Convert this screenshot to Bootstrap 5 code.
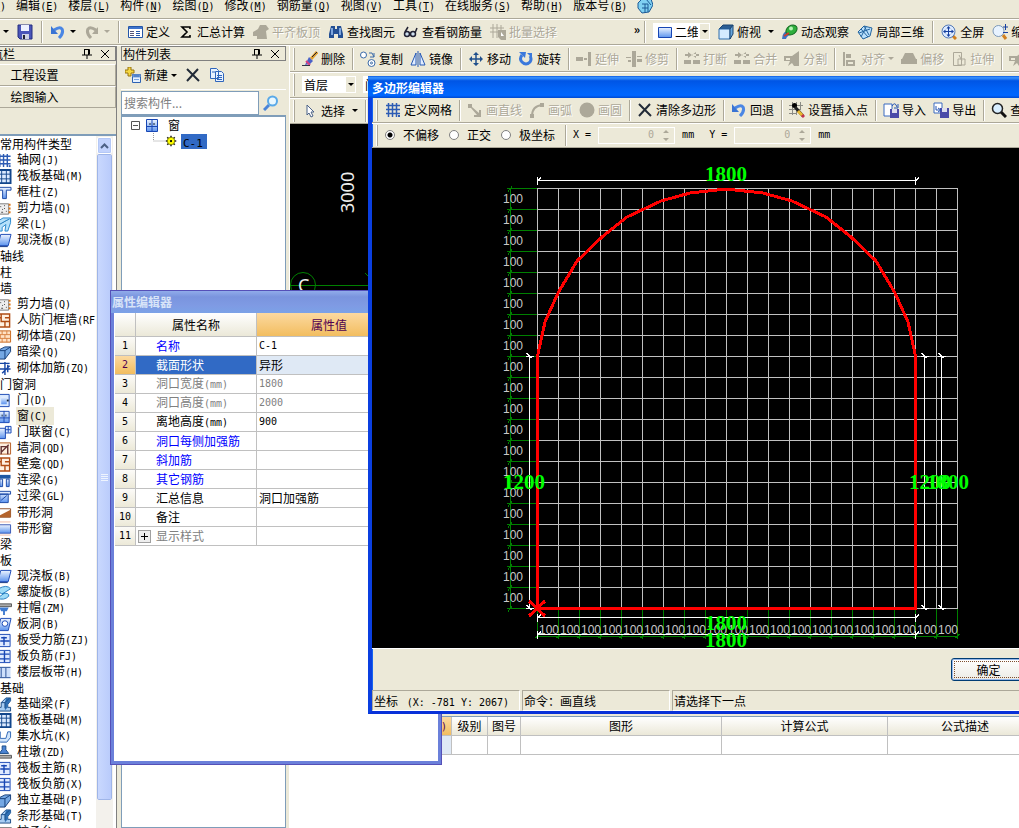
<!DOCTYPE html>
<html lang="zh-CN">
<head>
<meta charset="utf-8">
<meta name="viewport" content="width=device-width, initial-scale=1">
<title>多边形编辑器</title>
<link href="https://cdn.jsdelivr.net/npm/bootstrap@5.3.0/dist/css/bootstrap.min.css" rel="stylesheet">
<style>
:root{--face:#ece9d8;--dark:#aca899;--line:#c0c0c0;--edge:#7f9db9;--sel:#316ac5}
html,body{height:100%}
body{font:12px/16px "Noto Sans CJK SC",sans-serif;color:#000;background:var(--face);overflow:hidden}
button,input,select{font:inherit;color:inherit}
.sprite{position:absolute;width:0;height:0}
.app{position:relative;height:100vh;min-height:800px;margin-left:-47px;white-space:nowrap}
.lt{font-family:"DejaVu Sans Mono",monospace;font-size:10px}
.ic{width:16px;height:16px;flex:none}
.tb{background:none;border:0;padding:0;display:flex;align-items:center;gap:3px;flex:none}
.tb:disabled{color:var(--dark);text-shadow:1px 1px #fff}
.tb:disabled .ic{color:var(--dark)}
.bar{display:flex;align-items:center;border-bottom:1px solid var(--dark);box-shadow:0 1px #fff;overflow:hidden;flex:none}
.sep{width:1px;height:22px;background:var(--dark);box-shadow:1px 0 #fff;flex:none}
.grip{width:2px;height:22px;border-left:1px solid #fff;border-right:1px solid var(--dark);flex:none}
.dd{border:3px solid transparent;border-top-color:currentColor;border-bottom:0;width:6px;flex:none}
.menubar{height:19px;line-height:12px;gap:10px;padding:0 0 6px 11px}
.menubar button{background:none;border:0;padding:0}
.bar-a{height:26px;gap:8px}
.lead-group{width:157px}
.tail-group{width:80px}
.bar-b{height:26px;gap:7px;padding-left:3px}
.combo{position:relative;background:#fff;flex:none;height:17px;display:flex;align-items:center}
.combo select{appearance:none;border:0;background:transparent;padding:0 12px 0 2px;height:17px;line-height:16px;width:100%;min-width:0}
.combo .arrow{position:absolute;right:0;top:0;bottom:0;width:11px;background:var(--face);border:1px solid #fff;display:flex;align-items:center;justify-content:center;pointer-events:none}
.panes{flex:1;min-height:0;padding-top:1px}
.dock{width:164px;flex:none;display:flex;flex-direction:column;border-right:1px solid #808080}
.dockhead{height:15px;line-height:14px;border:1px solid #808080;padding:0 4px 0 1px;flex:none;display:flex;align-items:center;gap:6px}
.dock .dockhead{margin-bottom:3px}
.dockhead button{background:none;border:0;padding:0;display:flex}
.dockhead svg{width:12px;height:12px}
.navtab{height:22px;border:1px solid var(--dark);border-top-color:#fff;background:none;padding:0;text-align:center;width:100%;flex:none}
.navlist{flex:1;min-height:0;margin-top:26px;border-top:2px solid var(--edge);background:#fff;display:flex;overflow:hidden}
.navlist ul{flex:1;min-width:0;margin:0;padding:0 0 0 47px;list-style:none;overflow:hidden}
.navlist li{height:16px;line-height:16px;display:flex;align-items:center;gap:5px}
.navlist li.it{margin-left:-4px}
.navlist li.it .ic{height:15px}
.navlist .cur span{background:var(--face);padding:0 7px 0 1px;margin:0 -1px}
.navlist .cur b{padding:0!important}
.scroll{width:17px;flex:none;background:#f3f1ec;padding:1px;display:flex;flex-direction:column;margin-right:3px}
.scroll .up{height:17px;flex:none;border:1px solid #fff;border-radius:2px;background:#c3d3fd;padding:0;display:flex;align-items:center;justify-content:center;box-shadow:inset 0 0 0 1px #b4c8f6}
.scroll .thumb{flex:1;margin-bottom:27px;border:1px solid #fff;border-radius:2px;background:linear-gradient(90deg,#c9d8fe,#b9cbfb);outline:1px solid #9fb5e8;outline-offset:-1px;display:flex;align-items:center;justify-content:center}
.complist{width:165px;flex:none;display:flex;flex-direction:column;margin-left:4px}
.tools{height:28px}
.findrow{height:26px}
.search{height:24px;border:1px solid var(--edge);padding:0 2px;width:138px;background:#fff}
.search::placeholder{color:#808080}
.tree{flex:1;background:#fff;border:1px solid var(--edge);border-top-width:2px;padding:0 0 0 9px}
.tree>div{height:16px;display:flex;align-items:center}
.tree .gear{width:12px;height:12px}
.pick{background:var(--sel);padding:0 4px 0 2px;margin-left:4px;border:0;height:15px;line-height:15px}
.pick .lt{font-size:11px}
.work{flex:1;min-width:0;display:flex;flex-direction:column;margin-left:3px;border-left:1px solid #fff}
.cad{flex:1;background:#000;min-height:0;margin-bottom:3px;overflow:hidden}
.cad svg,.stage svg{display:block;width:100%}
.result{height:112px;flex:none;background:#fff;border-top:1px solid var(--edge);overflow:hidden}
.result table{width:calc(100% + 24px)}
.grid{table-layout:fixed;border-collapse:separate;border-spacing:0;background:#fff}
.grid th,.grid td{border-right:1px solid var(--line);border-bottom:1px solid var(--line);height:19px;padding:0;line-height:16px;overflow:hidden;font-weight:400}
.grid th{text-align:center;background:linear-gradient(#fff,#ebe8d8)}
.grid .hot{background:linear-gradient(#fcd9a0,#f2bd5f);color:#500050}
.grid .pale{background:#dfe9f5}
.win{position:absolute;display:flex;flex-direction:column}
.wtitle{font-weight:700;color:#fff;flex:none}
.props{left:157px;top:290px;width:332px;height:475px;background:#fff;border:solid #6b80da;border-width:0 4px 4px;outline:1px solid #5550b8;outline-offset:-1px}
.props .wtitle{height:23px;line-height:24px;background:linear-gradient(#94b0ec,#7a94de 30%,#7f9be4 70%,#7ba2e7);color:#d8e4f8;margin:0 -4px;padding-left:2px}
.props table{width:287px;margin-left:1px}
.props thead th{height:24px}
.props tbody th{background:linear-gradient(#fcfbf8,#ece9d8)}
.props td:nth-child(2){padding-left:20px;position:relative}
.props td:nth-child(3){padding-left:2px}
.props .opt{color:#00f}.props .off td{color:#808080}
.props .on td:nth-child(2){background:var(--sel);color:#fff}
.plus{position:absolute;left:2px;top:3px;width:13px;height:13px;border:1px solid #a0a0a0;background:#eee;padding:0;display:flex}
.poly{left:415px;top:76px;right:-23px;background:var(--face);border:solid #0831d9;border-width:0 4px 3px;border-left-color:#0a3fe0;box-shadow:inset 1px 0 #1663f0}
.poly .wtitle{height:22px;line-height:23px;background:linear-gradient(#0a5be4,#3a93ff 8%,#0055e5 22%,#0062f6 60%,#0066ff 88%,#0049d0);margin:0 -4px;padding-left:4px}
.poly .bar{height:25px;gap:7px;padding-left:4px}
.poly .bar .sep,.poly .bar .grip{height:21px}
.poly input[type=radio]{appearance:none;width:10px;height:10px;border:1px solid #808080;border-radius:50%;background:#fff;margin:0;flex:none}
.poly input[type=radio]:checked{background:radial-gradient(#000 2px,#fff 3px)}
.radio{display:flex;align-items:center;gap:8px;margin-right:3px}
.spin{width:77px;height:17px;border:1px solid #fff;display:flex;align-items:center;gap:4px;flex:none;color:var(--dark)}
.spin input{flex:1;min-width:0;border:0;background:none;text-align:right;padding:0;color:var(--dark)}
.stage{background:#000;height:500px;flex:none}
.foot{height:42px;border-top:1px solid #fff;flex:none;display:flex;align-items:center;justify-content:flex-end;padding-right:12px}
.okbtn{width:75px;height:23px;border:1px solid #003c74;border-radius:3px;background:linear-gradient(#fff,#ecebe5);box-shadow:inset 0 0 0 1px #98b8ea;padding:0;outline:1px dotted #805030;outline-offset:-4px}
.status{display:flex;gap:2px;height:21px;flex:none}
.status div{width:148px;flex:none;border:1px solid #fff;border-top-color:var(--dark);border-left-color:var(--dark);padding-left:1px;line-height:19px}
.status div:last-child{width:auto;flex:1}
.dim{font:12px "Liberation Sans",sans-serif;fill:#c8c8c8}
.big{font:700 21px "Liberation Serif",serif;fill:#0f0}
.axis{font:18px "Noto Sans",sans-serif;fill:#eee}
</style>
</head>
<body>
<svg class="sprite" xmlns="http://www.w3.org/2000/svg" aria-hidden="true">
<linearGradient id="gb" x2="0" y2="1"><stop stop-color="#eef5ff"/><stop offset="1" stop-color="#5c93ee"/></linearGradient>
<symbol id="open" viewBox="0 0 16 16"><path d="M1 5h12v8H1z" fill="#f4cf63" stroke="#a57a20"/><path d="M7 2q5-1 6 3l2-1" fill="none" stroke="#355a9c"/></symbol>
<symbol id="save" viewBox="0 0 16 16"><path d="M1 1h14v14H3l-2-2z" fill="#4a55b8" stroke="#242f80"/><path d="M4 1h8v6H4z" fill="#eef2ff"/><path d="M5 10h7v5H5z" fill="#cfd3e4"/><path d="M6 11h2v4H6z" fill="#223"/></symbol>
<symbol id="undo" viewBox="0 0 16 16"><path d="M4 6q6-4 8-1 2 4-3 9" fill="none" stroke="#4a86e4" stroke-width="3"/><path d="M1 2v8h7z" fill="#3a74d4"/></symbol>
<symbol id="redo" viewBox="0 0 16 16"><path d="M12 6Q6 2 4 5q-2 4 3 9" fill="none" stroke="#aca899" stroke-width="3"/><path d="M14 3v7H8z" fill="#aca899"/></symbol>
<symbol id="form" viewBox="0 0 16 16"><path d="M1.500 2.500h14v11h-14z" fill="#fff" stroke="#2456a8"/><path d="M2 3h13v2H2z" fill="#3f74cc"/><path d="M3 7.500h4M3 9.500h4M3 11.500h4" stroke="#557"/><path d="M9 7.500h4M9 11.500h4M9 9.500h4" stroke="#2456a8"/></symbol>
<symbol id="sigma" viewBox="0 0 16 16"><path d="M12 5V3H4l5 5-5 5h8v-2" fill="none" stroke="#000" stroke-width="1.600"/></symbol>
<symbol id="hand" viewBox="0 0 16 16"><path d="M0 8l5-3 2-4h6l3 4-3 2 1 8H4v-3L0 12z" fill="currentColor"/></symbol>
<symbol id="bino" viewBox="0 0 16 16"><path d="M3 2h4v3h2V2h4l2 8v4h-5v-4H6v4H1v-4z" fill="#234f94"/><path d="M4 4v7M12 4v7" stroke="#9cc2f5" stroke-width="1.500"/></symbol>
<symbol id="glass" viewBox="0 0 16 16"><g fill="#cfe0f0" stroke="#223" stroke-width="1.500"><circle cx="4" cy="10" r="2.500"/><circle cx="10" cy="10" r="2.500"/><path d="M2 8l3-5M12 9l2-5" fill="none"/></g></symbol>
<symbol id="batch" viewBox="0 0 16 16"><path d="M3 0v14M7 0v14M0 4h14M0 8h14M11 1v6" stroke="currentColor"/><path d="M8 6h8v10h-5l-3-3z" fill="currentColor"/><path d="M11 8l3 4h-3z" fill="#fff"/></symbol>
<symbol id="view" viewBox="0 0 16 16"><path d="M1.500 3.500h13v10h-13z" fill="url(#gb)" stroke="#1746b4"/></symbol>
<symbol id="cube" viewBox="0 0 16 16"><path d="M1 5l4-4h10l-3 4z" fill="#2c5f94" stroke="#1b4470"/><path d="M1 5h11v10H1z" fill="#d4ebff" stroke="#2c6cac"/><path d="M12 5l3-4v9l-3 5z" fill="#68a7dd" stroke="#1b4470"/></symbol>
<symbol id="orbit" viewBox="0 0 16 16"><path d="M0 15q0-8 8-9l3 4q-6 1-7 5z" fill="#3c73c4"/><ellipse cx="9.500" cy="6" rx="6" ry="4.500" transform="rotate(-35 9.500 6)" fill="#2fae3c" stroke="#176c24"/><circle cx="9" cy="4.500" r="2" fill="#b5f2b4"/><path d="M2 12l5-3" stroke="#d03c2c" stroke-width="2"/></symbol>
<symbol id="part" viewBox="0 0 16 16"><path d="M1 8l6-6 8 2-2 8-7 3z" fill="#b9e0fb" stroke="#22649f"/><path d="M4 5l7 8M7 2l5 9M2 9l11-4M9 3l-5 10" stroke="#22649f" fill="none"/></symbol>
<symbol id="full" viewBox="0 0 16 16"><path d="M12 12l3 3" stroke="#d08020" stroke-width="3"/><circle cx="7.500" cy="7.500" r="6.500" fill="#dceaff" stroke="#557bb8"/><path d="M7.500 3v9M3 7.500h9" stroke="#1740a0"/><path d="M7.500 2l2 2.500h-4zM7.500 13l2-2.500h-4zM2 7.500l2.500-2v4zM13 7.500l-2.500-2v4z" fill="#1740a0"/></symbol>
<symbol id="zoomi" viewBox="0 0 16 16"><path d="M11 11l3 4" stroke="#d08020" stroke-width="3"/><circle cx="6.500" cy="7" r="5.500" fill="#e8f3ff" stroke="#7c98b8"/><path d="M11 3h5M13.500 0v6M11 8.500h5" stroke="#1740a0"/></symbol>
<symbol id="brush" viewBox="0 0 16 16"><path d="M15 1L9 8" stroke="#e0a030" stroke-width="3"/><path d="M15 1l-5 5" stroke="#223"/><path d="M7 6l4 4-3 3-5 1z" fill="#4a62c8"/><path d="M4 10l4 4" stroke="#d84080" stroke-width="2"/><path d="M0 14.500h8" stroke="#334"/></symbol>
<symbol id="copy" viewBox="0 0 16 16"><g fill="#fff" stroke="#3a6aa8"><circle cx="3.500" cy="4" r="3"/><circle cx="11.500" cy="12" r="3.500"/><circle cx="11.500" cy="12" r="1"/></g><path d="M9 2h3l2 4M14 2v4h-4" fill="none" stroke="#3a6aa8"/></symbol>
<symbol id="mirror" viewBox="0 0 16 16"><path d="M6 2v12H1zM10 2v12h5z" fill="#e2edff" stroke="#2558b4"/><path d="M8 0v16" stroke="#2558b4"/></symbol>
<symbol id="move" viewBox="0 0 16 16"><path d="M8 2v12M2 8h12" stroke="#20508c" stroke-width="1.500"/><path d="M8 1l3 3H5zM8 15l3-3H5zM1 8l3-3v6zM15 8l-3-3v6z" fill="#20508c"/></symbol>
<symbol id="rot" viewBox="0 0 16 16"><path d="M4 4q-3 4 0 7 4 4 8 0 2-3 0-6" fill="none" stroke="#3a78dc" stroke-width="3"/><path d="M1 1h7L7 7z" fill="#3a78dc"/><path d="M9 2h5v5z" fill="#3a78dc"/></symbol>
<symbol id="ext" viewBox="0 0 16 16"><path d="M0 6h7v4H0zM8 7h3v2H8zM12 1h3v14h-3z" fill="currentColor"/></symbol>
<symbol id="trim" viewBox="0 0 16 16"><path d="M6 0h4v16H6zM0 6h5v1H0zM2 9h3v2H2zM11 5h5v1h-5zM11 8h5v3h-5z" fill="currentColor"/></symbol>
<symbol id="brk" viewBox="0 0 16 16"><path d="M0 9h7v4H0zM9 9h7v4H9zM1 3h6v2H1zM9 3h6v2H9zM4 1l4 3-4 3zM12 1L8 4l4 3z" fill="currentColor"/></symbol>
<symbol id="cut" viewBox="0 0 16 16"><path d="M0 5h8l7-5v15h-5l-2-3-4 3 2-5H0zM2 7v2h4V7z" fill="currentColor" fill-rule="evenodd"/></symbol>
<symbol id="align" viewBox="0 0 16 16"><path d="M1 1h2v14H1zM4 3h5v4H4zM4 9h9v6H4zM6 11v2h5v-2z" fill="currentColor" fill-rule="evenodd"/></symbol>
<symbol id="offs" viewBox="0 0 16 16"><path d="M4 2h8l3 6h1v5H0V8h1z" fill="currentColor"/></symbol>
<symbol id="stretch" viewBox="0 0 16 16"><path d="M2.500 1.500h8v13h-8zM7 8h7v6H7zM8 4l3 6" fill="none" stroke="currentColor"/></symbol>
<symbol id="ptr" viewBox="0 0 16 16"><path d="M5 2v10l2-2 2 4 2-1-2-4h3z" fill="#fff" stroke="#4b6288"/></symbol>
<symbol id="netg" viewBox="0 0 16 16"><path d="M3.500 1v14M7.500 1v14M11.500 1v14M1 3.500h14M1 7.500h14M1 11.500h14" stroke="#2d5cb4" stroke-width="1.500"/><path d="M13 13h2v2h-2z" fill="#2d5cb4"/></symbol>
<symbol id="ln" viewBox="0 0 16 16"><path d="M1 2h4v3l7 6v-3h2v7H7v-2h3L4 6H1z" fill="currentColor"/></symbol>
<symbol id="arcs" viewBox="0 0 16 16"><path d="M3 14Q3 4 13 3" fill="none" stroke="currentColor" stroke-width="2"/><path d="M1 12h4v4H1zM11 1h4v4h-4z" fill="currentColor"/></symbol>
<symbol id="circ" viewBox="0 0 16 16"><circle cx="8" cy="8" r="7.500" fill="currentColor"/></symbol>
<symbol id="x" viewBox="0 0 16 16"><path d="M2 2l12 12M13 2L2 14" stroke="#222b38" stroke-width="2"/></symbol>
<symbol id="insp" viewBox="0 0 16 16"><path d="M3.500 0v13M7.500 0v13M11.500 0v8M0 3.500h14M0 7.500h12M0 11.500h8" stroke="#8b8b84"/><circle cx="5.500" cy="3.500" r="2.500"/><path d="M6 5l8 9" stroke="#222" stroke-width="3"/><path d="M9 9l5 5" stroke="#e8b830" stroke-width="3"/><path d="M13 13l2 2" stroke="#c03050" stroke-width="3"/></symbol>
<symbol id="imp" viewBox="0 0 16 16"><path d="M1 2h8v12H1z" fill="#fff" stroke="#3a6ac0"/><path d="M7 7h9v9H7z" fill="#4a4aa8"/><path d="M9 7h5v4H9z" fill="#dde"/><path d="M9 4q3-5 5 1M15 2v4h-4" fill="none" stroke="#2554b4"/></symbol>
<symbol id="expo" viewBox="0 0 16 16"><path d="M1 1h8v10H1z" fill="#fff" stroke="#3a6ac0"/><path d="M7 6h9v10H7z" fill="#4a4aa8"/><path d="M9 6h5v4H9z" fill="#dde"/><path d="M3 4v4h4M5 6l3 2-3 2" fill="none" stroke="#2554b4"/></symbol>
<symbol id="find" viewBox="0 0 16 16"><path d="M10 10l5 5" stroke="#111" stroke-width="3"/><circle cx="6.500" cy="6.500" r="5" fill="#d8eeff" stroke="#222" stroke-width="1.500"/></symbol>
<symbol id="lens" viewBox="0 0 16 16"><path d="M6 10l-5 5" stroke="#4a84d8" stroke-width="3"/><circle cx="9.500" cy="6" r="4.500" fill="#eaf8ff" stroke="#59a9e8" stroke-width="2"/></symbol>
<symbol id="newi" viewBox="0 0 16 16"><path d="M7.500 7.500h8v8h-8z" fill="#e4f0ff" stroke="#2d62b4"/><path d="M8 8h7v2H8zM9 12.500h5" fill="#2d62b4" stroke="#7aa4e0"/><path d="M3 0h3v3h3v3H6v3H3V6H0V3h3z" fill="#f5d742" stroke="#98740c"/></symbol>
<symbol id="pages" viewBox="0 0 16 16"><g fill="#e8f2ff" stroke="#2f66bc"><path d="M1.500 1.500h6l2 2v8h-8zM6.500 4.500h6l2 2v8h-8z"/><path d="M8 8.500h5M8 10.500h5M8 12.500h5M3 5h3"/></g></symbol>
<symbol id="win" viewBox="0 0 16 16"><path d="M2.500 2.500h11v12h-11z" fill="url(#gb)" stroke="#1746b4"/><path d="M8 2v12M2 9.500h12" stroke="#1746b4"/><path d="M6 6v2M10 6v2" stroke="#123"/></symbol>
<symbol id="sun" viewBox="0 0 16 16"><path d="M8 1v14M1 8h14M3 3l10 10M13 3L3 13" stroke="#222" stroke-width="2"/><circle cx="8" cy="8" r="5" fill="#ff0" stroke="#660"/><circle cx="8" cy="8" r="1.500"/></symbol>
<symbol id="globe" viewBox="0 0 16 16"><path d="M1 5l5-5 8 1 2 6-4 7-7 1-4-5z" fill="#7fd0f2" stroke="#1c5a96"/><path d="M5 6h6v8M8 6v9M5 10h6M9 1l5 6" fill="none" stroke="#1c5a96"/></symbol>
<symbol id="raft" viewBox="0 0 16 16"><path d="M1 1h14v14H1z" fill="#dceaff" stroke="#12468c" stroke-width="2"/><path d="M5.500 1v14M10.500 1v14M1 5.500h14M1 10.500h14" stroke="#12468c"/></symbol>
<symbol id="colm" viewBox="0 0 16 16"><path d="M1.500 2.500h14v3h-5v9h-4v-9h-5z" fill="url(#gb)" stroke="#1746a4"/></symbol>
<symbol id="shear" viewBox="0 0 16 16"><path d="M0 3h13v11H0z" fill="#eee" stroke="#777"/><path d="M4 6h1M8 5h1M6 9h1M10 11h1M5 12h2M8 8h1" stroke="#444"/><path d="M13 4h2M13 8h2M13 12h2" stroke="#e07818" stroke-width="2"/></symbol>
<symbol id="beam" viewBox="0 0 16 16"><path d="M2 4l5-3h8v5l-3 9H9l1-7-4 3v4H3V9H1z" fill="#b4e0fa" stroke="#2284cc"/><path d="M3 8l7-4 4-2" stroke="#2284cc"/></symbol>
<symbol id="slab" viewBox="0 0 16 16"><path d="M4.500 1.500h11l-3 12h-11z" fill="url(#gb)" stroke="#1746b4"/><path d="M2 14.500h10" stroke="#0a2f80"/></symbol>
<symbol id="shole" viewBox="0 0 16 16"><path d="M4.500 1.500h11l-3 13h-11z" fill="url(#gb)" stroke="#1746b4"/><circle cx="9" cy="7" r="3" fill="#fff" stroke="#1746b4"/></symbol>
<symbol id="brick" viewBox="0 0 16 16"><path d="M1 2h14v12H1z" fill="#ffe2c4" stroke="#c86418"/><path d="M1 6h14M1 10h14M6 2v4M11 2v4M4 6v4M9 6v4M6 10v4M11 10v4" stroke="#d88040"/></symbol>
<symbol id="nich" viewBox="0 0 16 16"><path d="M1 1h13v14H1z" fill="#fff0e0" stroke="#b04c14" stroke-width="1.500"/><path d="M5 1v8h4v6M9 5h5M9 9h5M1 5h4" fill="none" stroke="#b04c14" stroke-width="1.500"/></symbol>
<symbol id="hbeam" viewBox="0 0 16 16"><path d="M1 6l8-4h6v5l-6 8H1z" fill="#74a8e4" stroke="#123c78"/><path d="M1 6h8v9M9 6l6-4" fill="none" stroke="#123c78"/></symbol>
<symbol id="rebar" viewBox="0 0 16 16"><path d="M1 2.500h13M1 8.500h14M9 1v14M12 4v8M6 13l8-8" stroke="#1746a4" stroke-width="1.500" fill="none"/></symbol>
<symbol id="door" viewBox="0 0 16 16"><path d="M2.500 1.500h11v13h-11z" fill="#d8e8ff" stroke="#1746b4"/><path d="M5 4h6v8H5z" fill="url(#gb)"/><path d="M11 8h2" stroke="#123" stroke-width="2"/></symbol>
<symbol id="dwin" viewBox="0 0 16 16"><path d="M1.500 3.500h8v11h-8z" fill="url(#gb)" stroke="#1746b4"/><path d="M9.500 1.500h6v7h-6zM12.500 1v7M9 5h6" fill="#d8e8ff" stroke="#1746b4"/></symbol>
<symbol id="hole" viewBox="0 0 16 16"><path d="M1 2h14v12H1z" fill="#fff0e0" stroke="#b85c20"/><path d="M5 14V6h7v8M5 12l8-8" fill="none" stroke="#633" stroke-width="1.500"/></symbol>
<symbol id="lbeam" viewBox="0 0 16 16"><path d="M1 2h14v4H1z" fill="#1d58a4"/><path d="M3.500 6.500h3v8h-3zM10.500 6.500h3v8h-3z" fill="url(#gb)" stroke="#1746a4"/></symbol>
<symbol id="lint" viewBox="0 0 16 16"><path d="M1 2.500h14v3H1zM3.500 5.500h9v9h-9z" fill="url(#gb)" stroke="#1746a4"/><path d="M5 12l6-5" stroke="#1746a4"/></symbol>
<symbol id="strip" viewBox="0 0 16 16"><path d="M0 4h15v9H0z" fill="#fff" stroke="#8c4c24"/><path d="M0 13l15-8v8z" fill="#b4642c"/></symbol>
<symbol id="strw" viewBox="0 0 16 16"><path d="M0 4h15v9H0z" fill="url(#gb)" stroke="#3858b4"/><path d="M0 1h15M0 15h15" stroke="#f0b8a0"/></symbol>
<symbol id="spiral" viewBox="0 0 16 16"><path d="M2 4q9-5 13 0l-8 5q7-1 6 3-5 5-12 2l7-5q-6 1-6-5z" fill="#9fdcf8" stroke="#247cc0"/></symbol>
<symbol id="cap" viewBox="0 0 16 16"><path d="M0 3h16v3H0z" fill="#aaa" stroke="#555"/><path d="M3 7h10l-2 4H9v4H7v-4H5z" fill="#3f7bd0"/></symbol>
<symbol id="band" viewBox="0 0 16 16"><path d="M0 2h15v12H0z" fill="#cfe0fb"/><path d="M0 2.500h15M0 13.500h15M5 3v10M10 3v10" stroke="#244c94"/></symbol>
<symbol id="base" viewBox="0 0 16 16"><path d="M1 11h4V6l5-5h5v3l-3 4v3h3v4H1z" fill="#a7cdf2" stroke="#174a84"/><path d="M10 1h5v3l-3 4v3l-3 3V6z" fill="#2f70b4"/><path d="M5 6h4v6M9 6l5-5" fill="none" stroke="#174a84"/></symbol>
<symbol id="pit" viewBox="0 0 16 16"><path d="M1 3h3v7h6l2-7h3v6l-4 5H4L1 11z" fill="#cfe4fb" stroke="#2c64b4"/></symbol>
<symbol id="pier" viewBox="0 0 16 16"><path d="M6 1h4v4l3 4H3l3-4z" fill="#4c84d4" stroke="#174a84"/><path d="M0 11h16v3H0z" fill="#aaa" stroke="#555"/></symbol>
<symbol id="sq" viewBox="0 0 16 16"><path d="M0 1.500h14.500v13H0" fill="#dfeaff" stroke="#1746b4"/><path d="M4 8.500h10M8 4v9M5 5h6" stroke="#1746b4" stroke-width="1.500"/></symbol>
<symbol id="sq2" viewBox="0 0 16 16"><path d="M0 1.500h14.500v13H0" fill="#dfeaff" stroke="#1746b4"/><path d="M2 5.500h12M2 10.500h12M8.500 2v12" stroke="#1746b4" stroke-width="1.500"/></symbol>
<symbol id="pin" viewBox="0 0 12 12"><path d="M3.500 1.500h5v5M1 7h10M6 7v4M7.500 2v5M3.500 1v6" fill="none" stroke="#000"/></symbol>
<symbol id="cls" viewBox="0 0 12 12"><path d="M2 2l8 8M10 2l-8 8" stroke="#000"/></symbol>
</svg>

<div class="app d-flex flex-column">
<nav class="bar menubar" aria-label="菜单">
<button>文件<span class="lt">(<u>F</u>)</span></button><button>编辑<span class="lt">(<u>E</u>)</span></button><button>楼层<span class="lt">(<u>L</u>)</span></button><button>构件<span class="lt">(<u>N</u>)</span></button><button>绘图<span class="lt">(<u>D</u>)</span></button><button>修改<span class="lt">(<u>M</u>)</span></button><button>钢筋量<span class="lt">(<u>Q</u>)</span></button><button>视图<span class="lt">(<u>V</u>)</span></button><button>工具<span class="lt">(<u>T</u>)</span></button><button>在线服务<span class="lt">(<u>S</u>)</span></button><button>帮助<span class="lt">(<u>H</u>)</span></button><button>版本号<span class="lt">(<u>B</u>)</span></button>
<svg class="ic"><use href="#globe"/></svg>
</nav>

<div class="bar bar-a">
<div class="lead-group d-flex flex-shrink-0 align-items-center justify-content-end gap-2">
<button class="tb gap-1" aria-label="打开"><svg class="ic"><use href="#open"/></svg><span class="dd"></span></button>
<button class="tb" aria-label="保存"><svg class="ic"><use href="#save"/></svg></button>
<span class="sep"></span>
<button class="tb gap-1" aria-label="撤销"><svg class="ic"><use href="#undo"/></svg><span class="dd"></span></button>
<button class="tb gap-1" aria-label="恢复" disabled><svg class="ic"><use href="#redo"/></svg><span class="dd"></span></button>
</div>
<span class="sep"></span>
<button class="tb"><svg class="ic"><use href="#form"/></svg>定义</button>
<button class="tb"><svg class="ic"><use href="#sigma"/></svg>汇总计算</button>
<button class="tb" disabled><svg class="ic"><use href="#hand"/></svg>平齐板顶</button>
<button class="tb"><svg class="ic"><use href="#bino"/></svg>查找图元</button>
<button class="tb"><svg class="ic"><use href="#glass"/></svg>查看钢筋量</button>
<button class="tb" disabled><svg class="ic"><use href="#batch"/></svg>批量选择</button>
<div class="tail-group d-flex flex-shrink-0 align-items-center justify-content-end gap-1"><button class="tb align-self-start fw-bold" aria-label="更多">»</button><span class="sep"></span></div>
<div class="combo" style="width:57px"><svg class="ic ms-1"><use href="#view"/></svg><select aria-label="视图方式"><option>二维</option></select><span class="arrow"><span class="dd"></span></span></div>
<button class="tb"><svg class="ic"><use href="#cube"/></svg>俯视<span class="dd ms-1"></span></button>
<button class="tb"><svg class="ic"><use href="#orbit"/></svg>动态观察</button>
<button class="tb"><svg class="ic"><use href="#part"/></svg>局部三维</button>
<span class="sep"></span>
<button class="tb"><svg class="ic"><use href="#full"/></svg>全屏</button>
<button class="tb"><svg class="ic"><use href="#zoomi"/></svg>缩放</button>
</div>

<div class="panes d-flex">
<aside class="dock">
<div class="dockhead"><span class="flex-grow-1">模块导航栏</span><button aria-label="固定"><svg><use href="#pin"/></svg></button><button aria-label="关闭"><svg><use href="#cls"/></svg></button></div>
<button class="navtab">工程设置</button>
<button class="navtab">绘图输入</button>
<div class="navlist"><ul id="nav"></ul>
<div class="scroll"><button class="up" aria-label="向上"><svg width="9" height="6"><path d="M1 5l3.500-3.500L8 5" fill="none" stroke="#4d6185" stroke-width="2"/></svg></button>
<div class="thumb"><svg width="8" height="9"><path d="M0 1.500h7M0 3.500h7M0 5.500h7M0 7.500h7" stroke="#eef4fe"/></svg></div></div></div>
</aside>

<section class="complist">
<div class="dockhead"><span class="flex-grow-1">构件列表</span><button aria-label="固定"><svg><use href="#pin"/></svg></button><button aria-label="关闭"><svg><use href="#cls"/></svg></button></div>
<div class="tools d-flex align-items-center ps-1 gap-2">
<button class="tb"><svg class="ic"><use href="#newi"/></svg>新建<span class="dd"></span></button>
<button class="tb" aria-label="删除构件"><svg class="ic"><use href="#x"/></svg></button>
<button class="tb" aria-label="复制构件"><svg class="ic"><use href="#pages"/></svg></button>
</div>
<div class="findrow d-flex align-items-center gap-1 border-top border-white"><input class="search" type="text" aria-label="搜索构件" placeholder="搜索构件..."><button class="tb" aria-label="搜索"><svg class="ic"><use href="#lens"/></svg></button></div>
<div class="tree">
<div class="gap-1"><svg width="9" height="9"><path d="M.5.5h8v8h-8zM2 4.500h5" fill="#fff" stroke="#555"/></svg><svg class="ic"><use href="#win"/></svg><span class="ms-1">窗</span></div>
<div><svg width="34" height="16"><path d="M22.500 0v8h11" fill="none" stroke="#999" stroke-dasharray="1 1"/></svg><svg class="ic gear"><use href="#sun"/></svg><button class="pick"><span class="lt">C-1</span></button></div>
</div>
</section>

<main class="work">
<div class="bar bar-b">
<span class="grip"></span>
<button class="tb"><svg class="ic"><use href="#brush"/></svg>删除</button><span class="sep"></span>
<button class="tb"><svg class="ic"><use href="#copy"/></svg>复制</button>
<button class="tb"><svg class="ic"><use href="#mirror"/></svg>镜像</button><span class="sep"></span>
<button class="tb"><svg class="ic"><use href="#move"/></svg>移动</button>
<button class="tb"><svg class="ic"><use href="#rot"/></svg>旋转</button><span class="sep"></span>
<button class="tb" disabled><svg class="ic"><use href="#ext"/></svg>延伸</button>
<button class="tb" disabled><svg class="ic"><use href="#trim"/></svg>修剪</button><span class="sep"></span>
<button class="tb" disabled><svg class="ic"><use href="#brk"/></svg>打断</button>
<button class="tb" disabled><svg class="ic"><use href="#brk"/></svg>合并</button>
<button class="tb" disabled><svg class="ic"><use href="#cut"/></svg>分割</button><span class="sep"></span>
<button class="tb" disabled><svg class="ic"><use href="#align"/></svg>对齐<span class="dd"></span></button>
<button class="tb" disabled><svg class="ic"><use href="#offs"/></svg>偏移</button>
<button class="tb" disabled><svg class="ic"><use href="#stretch"/></svg>拉伸</button><span class="sep"></span>
<button class="tb" disabled aria-label="设置"><svg class="ic"><use href="#cut"/></svg></button>
</div>
<div class="bar bar-b">
<span class="grip"></span>
<div class="combo" style="width:54px"><select aria-label="楼层"><option>首层</option></select><span class="arrow"><span class="dd"></span></span></div>
<div class="combo" style="width:80px"><select aria-label="构件类型"><option>门窗洞</option></select><span class="arrow"><span class="dd"></span></span></div>
</div>
<div class="bar bar-b">
<span class="grip"></span>
<button class="tb"><svg class="ic"><use href="#ptr"/></svg>选择<span class="dd ms-1"></span></button><span class="sep"></span>
</div>
<div class="cad"><svg height="200"><text class="axis" transform="translate(64 89) rotate(-90)">3000</text><path d="M0 161.500h100M75 149l4 4" stroke="#008000"/><circle cx="13" cy="161" r="12.500" fill="none" stroke="#008000"/><text class="axis" x="8" y="168">C</text></svg></div>
<div class="result">
<table class="grid"><colgroup><col style="width:162px"><col style="width:36px"><col style="width:33px"><col style="width:201px"><col style="width:166px"><col></colgroup>
<thead><tr><th class="hot text-end"><span class="lt pe-1">)</span></th><th>级别</th><th>图号</th><th>图形</th><th>计算公式</th><th>公式描述</th></tr></thead>
<tbody><tr><td class="pale"></td><td></td><td></td><td></td><td></td><td></td></tr></tbody></table>
</div>
</main>
</div>

<section class="win props">
<div class="wtitle">属性编辑器</div>
<table class="grid"><colgroup><col style="width:21px"><col style="width:121px"><col style="width:145px"></colgroup>
<thead><tr><th></th><th>属性名称</th><th class="hot">属性值</th></tr></thead>
<tbody>
<tr><th class="lt">1</th><td class="opt">名称</td><td class="lt">C-1</td></tr>
<tr class="on"><th class="lt hot">2</th><td>截面形状</td><td class="pale">异形</td></tr>
<tr class="off"><th class="lt">3</th><td>洞口宽度<span class="lt">(mm)</span></td><td class="lt">1800</td></tr>
<tr class="off"><th class="lt">4</th><td>洞口高度<span class="lt">(mm)</span></td><td class="lt">2000</td></tr>
<tr><th class="lt">5</th><td>离地高度<span class="lt">(mm)</span></td><td class="lt">900</td></tr>
<tr><th class="lt">6</th><td class="opt">洞口每侧加强筋</td><td></td></tr>
<tr><th class="lt">7</th><td class="opt">斜加筋</td><td></td></tr>
<tr><th class="lt">8</th><td class="opt">其它钢筋</td><td></td></tr>
<tr><th class="lt">9</th><td>汇总信息</td><td>洞口加强筋</td></tr>
<tr><th class="lt">10</th><td>备注</td><td></td></tr>
<tr class="off"><th class="lt">11</th><td><button class="plus" aria-label="展开"><svg width="11" height="11"><path d="M5.500 2v7M2 5.500h7" stroke="#000"/></svg></button>显示样式</td><td></td></tr>
</tbody></table>
</section>

<section class="win poly">
<div class="wtitle">多边形编辑器</div>
<div class="bar">
<span class="grip"></span>
<button class="tb"><svg class="ic"><use href="#netg"/></svg>定义网格</button><span class="sep"></span>
<button class="tb" disabled><svg class="ic"><use href="#ln"/></svg>画直线</button>
<button class="tb" disabled><svg class="ic"><use href="#arcs"/></svg>画弧</button>
<button class="tb" disabled><svg class="ic"><use href="#circ"/></svg>画圆</button><span class="sep"></span>
<button class="tb"><svg class="ic"><use href="#x"/></svg>清除多边形</button><span class="sep"></span>
<button class="tb"><svg class="ic"><use href="#undo"/></svg>回退</button><span class="sep"></span>
<button class="tb"><svg class="ic"><use href="#insp"/></svg>设置插入点</button><span class="sep"></span>
<button class="tb"><svg class="ic"><use href="#imp"/></svg>导入</button>
<button class="tb"><svg class="ic"><use href="#expo"/></svg>导出</button><span class="sep"></span>
<button class="tb"><svg class="ic"><use href="#find"/></svg>查询</button>
</div>
<div class="bar">
<span class="grip"></span>
<label class="radio"><input type="radio" name="m" checked>不偏移</label>
<label class="radio"><input type="radio" name="m">正交</label>
<label class="radio"><input type="radio" name="m">极坐标</label>
<span class="sep"></span>
<label for="dx" class="lt">X =</label>
<div class="spin"><input id="dx" class="lt" value="0" disabled><svg width="16" height="13"><path d="M5 4l3-3 3 3zM5 9l3 3 3-3z" fill="#aca899"/></svg></div><span class="lt">mm</span>
<label for="dy" class="lt ms-2">Y =</label>
<div class="spin"><input id="dy" class="lt" value="0" disabled><svg width="16" height="13"><path d="M5 4l3-3 3 3zM5 9l3 3 3-3z" fill="#aca899"/></svg></div><span class="lt">mm</span>
</div>
<div class="stage"><svg id="draw" height="500" shape-rendering="crispEdges" role="img" aria-label="多边形"></svg></div>
<div class="foot"><button class="okbtn">确定</button></div>
<div class="status"><div>坐标 <span class="lt">&nbsp;(X: -781 Y: 2067)</span></div><div>命令：画直线</div><div>请选择下一点</div></div>
</section>
</div>

<script>
// navigation tree: plain entries are groups, "name|key|icon" entries are component types
const types=`常用构件类型,轴网|J|netg,筏板基础|M|raft,框柱|Z|colm,剪力墙|Q|shear,梁|L|beam,现浇板|B|slab,轴线,柱,墙,剪力墙|Q|shear,人防门框墙|RF|nich,砌体墙|ZQ|brick,暗梁|Q|hbeam,砌体加筋|ZQ|rebar,门窗洞,门|D|door,窗|C|win,门联窗|C|dwin,墙洞|QD|hole,壁龛|QD|nich,连梁|G|lbeam,过梁|GL|lint,带形洞||strip,带形窗||strw,梁,板,现浇板|B|slab,螺旋板|B|spiral,柱帽|ZM|cap,板洞|B|shole,板受力筋|ZJ|sq,板负筋|FJ|sq2,楼层板带|H|band,基础,基础梁|F|base,筏板基础|M|raft,集水坑|K|pit,柱墩|ZD|pier,筏板主筋|R|sq,筏板负筋|X|sq2,独立基础|P|hbeam,条形基础|T|base,桩承台|V|cap`.split(',');
document.getElementById('nav').innerHTML=types.map(t=>{
  const [n,k,i]=t.split('|');
  if(!i) return `<li>${n}</li>`;
  const key=k?`<b class="lt fw-normal">(${k}${k==='RF'?'':')'}</b>`:'';
  return `<li class="it${n==='窗'?' cur':''}"><svg class="ic"><use href="#${i}"/></svg><span>${n}${key}</span></li>`;
}).join('');

// drawing: 20 x 20 cells of 100 mm, one cell is 21 px
const C=21,X=165,Y=40,N=20,W=X+18*C,B=Y+N*C;
let grid='',green='',txt='';
for(let i=0;i<=N;i++){
  const x=X+i*C+.5,y=Y+i*C+.5;
  grid+=`M${x} ${Y}V${B}M${X} ${y}H${X+N*C+1}`;
  green+=`M135 ${y}H${X}M${x} ${B}V491M136 ${y+3}l4-5M${x-2} 490l4-4`;
  if(i<N) txt+=`<text class="dim" x="131" y="${Y+15+i*C}">100</text><text class="dim" x="${X+2+i*C}" y="486">100</text>`;
}
green+=`M138.500 ${Y}V${B}M${X} 488.500H${X+N*C}`;
const R=Y+8*C;
const h=y=>`M${X} ${y}H${W}M${X+.5} ${y-4}v8M${W+.5} ${y-4}v8M${X} ${y+1}l4-4M${W} ${y+1}l4-4`;
const v=x=>`M${x} ${R}V${B}M${x-4} ${R+.5}h8M${x-4} ${B+.5}h8M${x-3} ${R-3}l5 5M${x-3} ${B-3}l5 5`;
const ticks=h(32.5)+h(469.5)+h(486.5)+v(157.5)+v(552.5)+v(569.5);
const half=[[165.5,208],[173,174],[186,145],[205,113],[230,89],[255,69],[289,53],[318,45],[354,41]];
const arch=half.concat(half.slice(0,-1).reverse().map(([x,y])=>[709-x,y]));
const labels=[[333,33,1800],[333,482,1800],[333,499,1800],[131,341,1200],[537,341,1200],[555,341,1800]];
document.getElementById('draw').innerHTML=
 `<path d="${green}" stroke="#008000" fill="none"/><path d="${grid}" stroke="#c0c0c0"/>${txt}<path d="${ticks}" stroke="#fff"/>`+
 `<path d="M165.500 460.500L${arch.map(p=>p.join(' ')).join('L')}L543.500 460.500H165.500M157 453l16 15M173 453l-16 15" fill="none" stroke="#f00" stroke-width="3"/>`+
 labels.map(([x,y,t])=>`<text class="big" x="${x}" y="${y}">${t}</text>`).join('');
</script>
<script src="https://cdn.jsdelivr.net/npm/bootstrap@5.3.0/dist/js/bootstrap.bundle.min.js"></script>
</body>
</html>
